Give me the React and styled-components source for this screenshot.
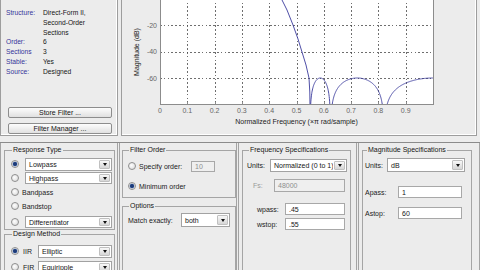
import styled, { createGlobalStyle } from "styled-components";

const GlobalStyle = createGlobalStyle`
  html, body {
    margin: 0;
    padding: 0;
    background: #ececec;
  }
  body {
    font-family: "Liberation Sans", Arial, sans-serif;
    font-size: 7px;
    color: #1b1b1b;
  }
`

const Window = styled.div`
  width: 480px;
  height: 270px;
  overflow: hidden;
  background: #ececec;
  display: flex;
  flex-direction: column;
`

const TopRow = styled.div`
  display: grid;
  grid-template-columns: 118px 356px;
  column-gap: 3px;
  height: 136px;
  flex-shrink: 0;
`

const InfoPanel = styled.div`
  display: flex;
  flex-direction: column;
  border: 1px solid #9d9d9d;
  border-top: none;
  box-shadow: inset -1px -1px 0 #fff;
  padding: 8px 0 1px 5px;
`

const InfoGrid = styled.dl`
  display: grid;
  grid-template-columns: 37px 1fr;
  margin: 0;
  font-size: 6.7px;
  line-height: 9.8px;
`

const InfoLabel = styled.dt`
  color: #34349a;
`

const InfoValue = styled.dd`
  margin: 0;
  color: #151515;
`

const ButtonStack = styled.div`
  margin-top: auto;
  display: flex;
  flex-direction: column;
  gap: 5px;
  padding: 0 5px 0 2px;
`

const PushButton = styled.button`
  height: 11px;
  padding: 0;
  font-family: inherit;
  font-size: 7px;
  line-height: 9px;
  color: #151515;
  border: 1px solid #8d8d8d;
  border-radius: 2px;
  background: linear-gradient(#fdfdfd, #e0e0e0);
`

const PlotPanel = styled.div`
  border: 1px solid #9d9d9d;
  border-top: none;
  box-shadow: inset -1px -1px 0 #fff;
  overflow: hidden;

  svg {
    display: block;
  }
`

const Divider = styled.div`
  height: 6px;
  flex-shrink: 0;
`

const BottomRow = styled.div`
  flex: 1;
  min-height: 0;
  display: grid;
  grid-template-columns: 118px 118px 119px 1fr;
  column-gap: 1px;
  border-top: 1px solid #8b8b8b;
`

const Column = styled.div`
  display: flex;
  flex-direction: column;
  gap: ${p => p.$gap || 0}px;
  padding: 3px ${p => p.$pr}px 0 ${p => p.$pl}px;
  border-left: 1px solid #a3a3a3;
  border-right: 1px solid #a3a3a3;
  min-height: 0;
`

const Group = styled.fieldset`
  margin: 0;
  padding: 0 0 ${p => p.$pb || 0}px 0;
  border: 1px solid #a5a5a5;
  min-width: 0;
  flex: none;
  min-height: ${p => p.$minH || 0}px;
`

const Legend = styled.legend`
  padding: 0 1px;
  margin-left: ${p => p.$indent}px;
  font-size: 7px;
  line-height: 8px;
  color: #151515;
`

const Row = styled.div`
  display: flex;
  align-items: center;
  height: ${p => p.$h || 14}px;
  margin-top: ${p => p.$mt || 0}px;
  padding-left: ${p => p.$indent || 0}px;
  padding-right: ${p => p.$pr || 0}px;
`

const Radio = styled.span`
  width: 8px;
  height: 8px;
  flex-shrink: 0;
  box-sizing: border-box;
  border-radius: 50%;
  border: 1px solid #8e8e8e;
  background: ${p => p.$on
    ? "radial-gradient(circle, #1c3a78 0 1.5px, #5d7fb8 2.1px, #e6e6e6 2.7px, #fafafa)"
    : "radial-gradient(circle at 40% 40%, #fdfdfd, #d8d8d8)"};
`

const Caption = styled.span`
  flex-shrink: 0;
  margin-left: ${p => p.$gap || 0}px;
  width: ${p => (p.$w ? `${p.$w}px` : "auto")};
  color: ${p => (p.$muted ? "#9a9a9a" : "#1b1b1b")};
  white-space: nowrap;
`

const SelectBox = styled.div`
  display: flex;
  align-items: stretch;
  box-sizing: border-box;
  width: ${p => (p.$w ? `${p.$w}px` : "auto")};
  flex: ${p => (p.$w ? "none" : "1")};
  height: ${p => p.$h || 12}px;
  margin-left: ${p => p.$ml || 0}px;
  border: 1px solid #a2a2a2;
  background: #fff;
`

const SelectText = styled.span`
  flex: 1;
  display: flex;
  align-items: center;
  padding-left: 3px;
  overflow: hidden;
  white-space: nowrap;
  color: #151515;
`

const ArrowButton = styled.span`
  width: 9px;
  margin: 1px;
  display: flex;
  align-items: center;
  justify-content: center;
  background: linear-gradient(#f8f8f8, #d6d6d6);
  border: 1px solid #c0c0c0;
  border-radius: 1px;

  &::after {
    content: "";
    border-left: 2.5px solid transparent;
    border-right: 2.5px solid transparent;
    border-top: 3px solid #111;
  }
`

const TextBox = styled.div`
  display: flex;
  align-items: center;
  box-sizing: border-box;
  width: ${p => p.$w}px;
  height: ${p => p.$h || 12}px;
  padding-left: 3px;
  border: 1px solid #a8a8a8;
  background: ${p => (p.$disabled ? "#efefef" : "#fff")};
  color: ${p => (p.$disabled ? "#8e8e8e" : "#151515")};
`

function Dropdown({ value, w, h, ml }) {
  return (
    <SelectBox $w={w} $h={h} $ml={ml}>
      <SelectText>{value}</SelectText>
      <ArrowButton />
    </SelectBox>
  )
}

// plot geometry, in panel coordinates
const AX_L = 38
const AX_R = 311
const AX_B = 104
const fx = f => AX_L + f * (AX_R - AX_L)
const dbY = d => -1.5 - d * 1.325

const N1 = 0.5495
const N2 = 0.6245
const N3 = 0.8205

function stopband(f) {
  let m
  if (f < N2) m = Math.sin(Math.PI * (f - N1) / (N2 - N1))
  else if (f < N3) m = Math.sin(Math.PI * (f - N2) / (N3 - N2))
  else m = Math.sin((Math.PI / 2) * (f - N3) / (1 - N3))
  return Math.max(-84, -60 + 20 * Math.log10(Math.max(Math.abs(m), 1e-5)))
}

function responsePath() {
  const pts = [
    [154, -8], [157, -3], [160, 0], [165, 10], [171, 25], [176, 39],
    [180, 52], [184, 65], [187, 78], [187.8, 92], [188, 106],
  ]
  for (let f = N1 + 0.0006; f <= 1.0001; f += 0.0008) {
    pts.push([fx(f), dbY(stopband(f))])
  }
  return pts.map(([x, y], i) => `${i ? "L" : "M"}${x.toFixed(2)} ${y.toFixed(2)}`).join(" ")
}

function MagnitudePlot() {
  const xs = [0, 0.1, 0.2, 0.3, 0.4, 0.5, 0.6, 0.7, 0.8, 0.9]
  const ys = [-20, -40, -60]
  return (
    <svg width="354" height="135" viewBox="0 0 354 135" fontFamily="Liberation Sans, Arial, sans-serif">
      <defs>
        <clipPath id="axes-clip">
          <rect x={AX_L} y={-5} width={AX_R - AX_L} height={AX_B + 5} />
        </clipPath>
      </defs>
      <rect x={AX_L} y={-5} width={AX_R - AX_L} height={AX_B + 5} fill="#fff" />
      <g stroke="#4a4a4a" strokeDasharray="1.6 2.2" strokeWidth="0.8" shapeRendering="crispEdges">
        {xs.slice(1).map(f => (
          <line key={f} x1={Math.round(fx(f)) + 0.5} x2={Math.round(fx(f)) + 0.5} y1={-5} y2={AX_B} />
        ))}
        {ys.map(d => (
          <line key={d} x1={AX_L} x2={AX_R} y1={Math.round(dbY(d)) + 0.5} y2={Math.round(dbY(d)) + 0.5} />
        ))}
      </g>
      <path d={responsePath()} fill="none" stroke="#3a3a9c" strokeWidth="0.9" clipPath="url(#axes-clip)" />
      <g stroke="#8c8c8c" fill="none" shapeRendering="crispEdges">
        <path d={`M${AX_L + 0.5} -5 V${AX_B + 0.5} H${AX_R + 0.5} V-5`} />
        {xs.slice(1).map(f => (
          <line key={f} x1={Math.round(fx(f)) + 0.5} x2={Math.round(fx(f)) + 0.5} y1={AX_B - 2} y2={AX_B} />
        ))}
      </g>
      <g fill="#666" fontSize="7" textAnchor="middle">
        {xs.map(f => (
          <text key={f} x={fx(f)} y={112.5}>{f === 0 ? "0" : f.toFixed(1)}</text>
        ))}
      </g>
      <g fill="#666" fontSize="7" textAnchor="end">
        {ys.map(d => (
          <text key={d} x={AX_L - 3} y={dbY(d) + 2.5}>{d}</text>
        ))}
      </g>
      <text x={(AX_L + AX_R) / 2} y={123.5} fontSize="7" fill="#222" textAnchor="middle">
        Normalized Frequency (×π rad/sample)
      </text>
      <text x={17} y={52} fontSize="7" fill="#222" textAnchor="middle" transform="rotate(-90 17 52)">
        Magnitude (dB)
      </text>
    </svg>
  )
}

export default function App() {
  return (
    <Window>
      <GlobalStyle />
      <TopRow>
        <InfoPanel>
          <InfoGrid>
            <InfoLabel>Structure:</InfoLabel>
            <InfoValue>Direct-Form II,<br />Second-Order<br />Sections</InfoValue>
            <InfoLabel>Order:</InfoLabel>
            <InfoValue>6</InfoValue>
            <InfoLabel>Sections</InfoLabel>
            <InfoValue>3</InfoValue>
            <InfoLabel>Stable:</InfoLabel>
            <InfoValue>Yes</InfoValue>
            <InfoLabel>Source:</InfoLabel>
            <InfoValue>Designed</InfoValue>
          </InfoGrid>
          <ButtonStack>
            <PushButton>Store Filter ...</PushButton>
            <PushButton>Filter Manager ...</PushButton>
          </ButtonStack>
        </InfoPanel>
        <PlotPanel>
          <MagnitudePlot />
        </PlotPanel>
      </TopRow>

      <Divider />

      <BottomRow>
        <Column $pl={3} $pr={2}>
          <Group>
            <Legend $indent={7}>Response Type</Legend>
            <Row $mt={3} $indent={6} $pr={2}>
              <Radio $on />
              <Dropdown ml={6} h={13} value="Lowpass" />
            </Row>
            <Row $indent={6} $pr={2}>
              <Radio />
              <Dropdown ml={6} h={12} value="Highpass" />
            </Row>
            <Row $indent={6}>
              <Radio />
              <Caption $gap={3}>Bandpass</Caption>
            </Row>
            <Row $indent={6}>
              <Radio />
              <Caption $gap={3}>Bandstop</Caption>
            </Row>
            <Row $mt={2} $indent={6} $pr={2}>
              <Radio />
              <Dropdown ml={6} h={12} value="Differentiator" />
            </Row>
          </Group>
          <Group $minH={80}>
            <Legend $indent={7}>Design Method</Legend>
            <Row $mt={5} $h={16} $indent={6} $pr={2}>
              <Radio $on />
              <Caption $gap={4} $w={15}>IIR</Caption>
              <Dropdown h={13} value="Elliptic" />
            </Row>
            <Row $h={16} $indent={6} $pr={2}>
              <Radio />
              <Caption $gap={4} $w={15}>FIR</Caption>
              <Dropdown h={13} value="Equiripple" />
            </Row>
          </Group>
        </Column>

        <Column $pl={2} $pr={0} $gap={4}>
          <Group $pb={4}>
            <Legend $indent={6}>Filter Order</Legend>
            <Row $mt={5} $indent={5}>
              <Radio />
              <Caption $gap={3} $w={52}>Specify order:</Caption>
              <TextBox $w={24} $h={11} $disabled>10</TextBox>
            </Row>
            <Row $mt={6} $indent={5}>
              <Radio $on />
              <Caption $gap={3}>Minimum order</Caption>
            </Row>
          </Group>
          <Group $minH={80}>
            <Legend $indent={6}>Options</Legend>
            <Row $mt={3} $indent={5}>
              <Caption $w={53}>Match exactly:</Caption>
              <Dropdown w={49} h={14} value="both" />
            </Row>
          </Group>
        </Column>

        <Column $pl={3} $pr={5}>
          <Group $minH={140}>
            <Legend $indent={6}>Frequency Specifications</Legend>
            <Row $mt={4} $indent={4}>
              <Caption $w={23}>Units:</Caption>
              <Dropdown w={77} h={13} value="Normalized (0 to 1)" />
            </Row>
            <Row $mt={6} $indent={10}>
              <Caption $w={21} $muted>Fs:</Caption>
              <TextBox $w={71} $h={13} $disabled>48000</TextBox>
            </Row>
            <Row $mt={10} $indent={14}>
              <Caption $w={28}>wpass:</Caption>
              <TextBox $w={60}>.45</TextBox>
            </Row>
            <Row $mt={1} $indent={14}>
              <Caption $w={28}>wstop:</Caption>
              <TextBox $w={60}>.55</TextBox>
            </Row>
          </Group>
        </Column>

        <Column $pl={3} $pr={7}>
          <Group $minH={140}>
            <Legend $indent={4}>Magnitude Specifications</Legend>
            <Row $mt={4} $indent={2}>
              <Caption $w={22}>Units:</Caption>
              <Dropdown w={78} h={14} value="dB" />
            </Row>
            <Row $mt={13} $indent={2}>
              <Caption $w={33}>Apass:</Caption>
              <TextBox $w={64}>1</TextBox>
            </Row>
            <Row $mt={7} $indent={2}>
              <Caption $w={33}>Astop:</Caption>
              <TextBox $w={64}>60</TextBox>
            </Row>
          </Group>
        </Column>
      </BottomRow>
    </Window>
  )
}
